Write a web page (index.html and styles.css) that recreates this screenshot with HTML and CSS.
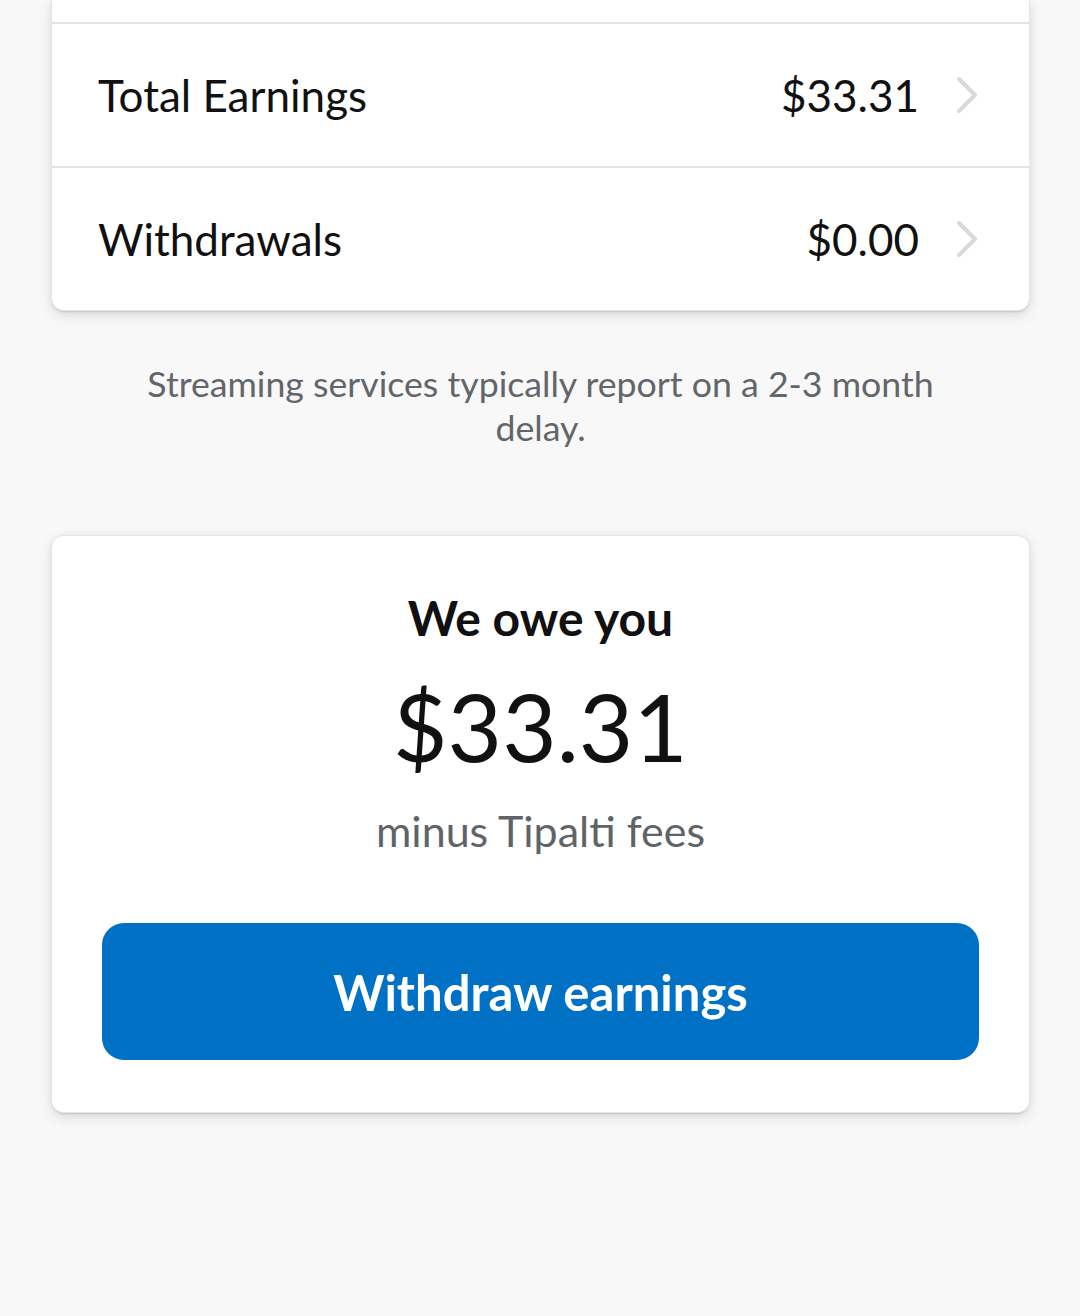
FILE: index.html
```html
<!DOCTYPE html>
<html lang="en">
<head>
<meta charset="utf-8">
<link rel="stylesheet" href="styles.css">
</head>
<body>
<main class="page">
  <section class="card list-card">
    <div class="list-top"></div>
    <a class="row">
      <span class="row-label">Total Earnings</span>
      <span class="row-value">$33.31</span>
      <svg class="chev" width="24" height="38" viewBox="0 0 24 38"><path d="M4 3 L20 19 L4 35" fill="none" stroke="#d9d9d9" stroke-width="4" stroke-linecap="round" stroke-linejoin="round"/></svg>
    </a>
    <a class="row">
      <span class="row-label">Withdrawals</span>
      <span class="row-value">$0.00</span>
      <svg class="chev" width="24" height="38" viewBox="0 0 24 38"><path d="M4 3 L20 19 L4 35" fill="none" stroke="#d9d9d9" stroke-width="4" stroke-linecap="round" stroke-linejoin="round"/></svg>
    </a>
  </section>

  <p class="note">Streaming services typically report on a 2-3 month delay.</p>

  <section class="card owe-card">
    <h2 class="owe-title">We owe you</h2>
    <div class="owe-amount">$33.31</div>
    <div class="owe-sub">minus Tipalti fees</div>
    <button class="btn">Withdraw earnings</button>
  </section>
</main>
</body>
</html>
```

FILE: styles.css
```css
html, body {
  margin: 0;
  padding: 0;
  background: #f8f8f8;
}
body {
  font-family: Lato, "Open Sans", sans-serif;
  color: #111;
}
.page {
  width: 977px;
  margin: 0 auto 0 52px;
  padding-bottom: 200px;
}
.card {
  background: #fff;
  border-radius: 12px;
  box-shadow: 0 0 0 1px #e6e6e6, 0 2px 2px rgba(0,0,0,0.12), 0 5px 14px rgba(0,0,0,0.12), 0 0 8px rgba(0,0,0,0.05);
}
.list-card {
  border-top-left-radius: 0;
  border-top-right-radius: 0;
}
.list-top {
  height: 22px;
}
.row {
  display: flex;
  align-items: center;
  height: 142px;
  border-top: 2px solid #e2e2e2;
  padding: 0 50px 0 46px;
  text-decoration: none;
  color: #111;
}
.row-label {
  flex: 1;
  font-size: 44px;
}
.row-value {
  font-size: 44px;
}
.chev {
  margin-left: 36px;
  display: block;
}
.note {
  margin: 52px 60px 0;
  text-align: center;
  font-size: 35.7px;
  line-height: 44px;
  color: #62666a;
}
.owe-card {
  margin-top: 86px;
  padding: 55px 50px 52px;
  display: flex;
  flex-direction: column;
  align-items: center;
}
.owe-title {
  margin: 0;
  font-size: 48px;
  font-weight: 700;
  line-height: 54px;
}
.owe-amount {
  margin-top: 26px;
  font-size: 94px;
  line-height: 110px;
}
.owe-sub {
  margin-top: 24px;
  font-size: 43px;
  line-height: 52px;
  color: #5f6468;
}
.btn {
  margin-top: 66px;
  width: 100%;
  height: 137px;
  border: 0;
  border-radius: 22px;
  background: #0071c5;
  color: #fff;
  font-family: Lato, sans-serif;
  font-size: 49px;
  font-weight: 700;
}
```
